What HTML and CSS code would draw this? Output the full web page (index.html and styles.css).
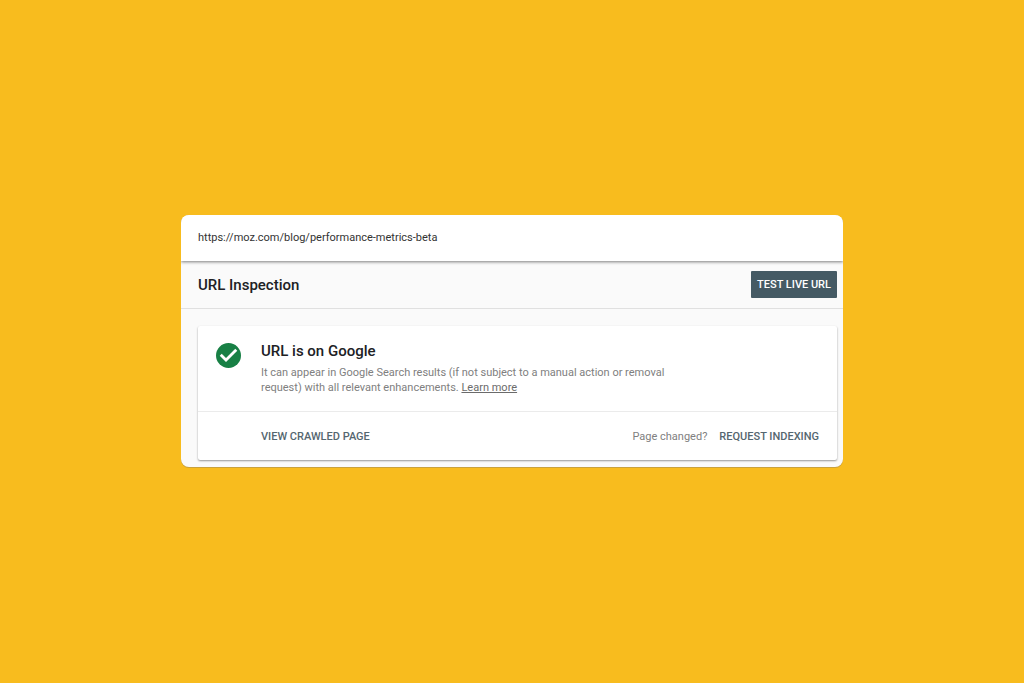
FILE: index.html
```html
<!DOCTYPE html>
<html lang="en">
<head>
<meta charset="utf-8">
<meta name="viewport" content="width=device-width, initial-scale=1">
<title>URL Inspection</title>
<link rel="stylesheet" href="styles.css">
</head>
<body>
<main class="panel">
  <header class="url-bar">https://moz.com/blog/performance-metrics-beta</header>
  <div class="title-bar">
    <h1 class="heading">URL Inspection</h1>
    <button class="test-button" type="button">TEST LIVE URL</button>
  </div>
  <div class="content">
    <section class="card">
      <div class="status">
        <svg class="status-icon" viewBox="2 2 20 20" aria-hidden="true">
          <circle cx="12" cy="12" r="10" fill="#188045"/>
          <path d="M10 17.2l-5-5 1.6-1.6 3.4 3.4 7.4-7.4L19 8.2z" fill="#fff"/>
        </svg>
        <div class="status-text">
          <h2 class="heading">URL is on Google</h2>
          <p class="description">It can appear in Google Search results (if not subject to a manual action or removal request) with all relevant enhancements. <a class="learn-link" href="#">Learn more</a></p>
        </div>
      </div>
      <footer class="actions">
        <button class="text-button" type="button">VIEW CRAWLED PAGE</button>
        <div class="indexing">
          <span class="hint">Page changed?</span>
          <button class="text-button" type="button">REQUEST INDEXING</button>
        </div>
      </footer>
    </section>
  </div>
</main>
</body>
</html>
```
FILE: styles.css
```css
* {
  box-sizing: border-box;
}

body {
  margin: 0;
  min-height: 100vh;
  padding: 24px 24px 25px;
  display: flex;
  align-items: center;
  justify-content: center;
  background: #f8bc1e;
  color: #202124;
  font-family: Roboto, "Liberation Sans", sans-serif;
  font-size: 11px;
}

button {
  border: 0;
  padding: 0;
  background: none;
  font: inherit;
  cursor: pointer;
}

.panel {
  width: 100%;
  max-width: 662px;
  overflow: hidden;
  border-radius: 8px;
  background: #fafafa;
  box-shadow: 0 1px 0 #c9a13c;
}

.url-bar {
  position: relative;
  padding: 15px 17px;
  background: #fff;
  box-shadow: 0 1px 3px rgba(0, 0, 0, 0.5);
  color: #333;
  line-height: 16px;
}

.title-bar {
  display: flex;
  align-items: center;
  justify-content: space-between;
  padding: 10px 6px 10px 17px;
  border-bottom: 1px solid #e0e0e0;
}

.heading {
  margin: 0;
  font-size: 15px;
  font-weight: 500;
  line-height: 20px;
}

.test-button {
  padding: 0 6px;
  border-radius: 1px;
  background: #455a64;
  color: #fff;
  font-weight: 500;
  line-height: 27px;
}

.content {
  padding: 17px 6px 7px 17px;
}

.card {
  border-radius: 2px;
  background: #fff;
  box-shadow: 0 1px 2px rgba(0, 0, 0, 0.4);
}

.status {
  display: flex;
  gap: 20px;
  padding: 15px 18px 16px;
  border-bottom: 1px solid #ebebeb;
}

.status-icon {
  flex: none;
  width: 25px;
  height: 25px;
  margin-top: 2px;
}

.description {
  max-width: 420px;
  margin: 4px 0 0;
  color: #808080;
  line-height: 15px;
}

.learn-link {
  color: #6b6b6b;
}

.actions {
  display: flex;
  align-items: center;
  justify-content: space-between;
  padding: 17px 18px 15px 63px;
  line-height: 16px;
}

.indexing {
  display: flex;
  gap: 12px;
}

.hint {
  color: #808080;
}

.text-button {
  color: #55666f;
  font-weight: 500;
}
```
